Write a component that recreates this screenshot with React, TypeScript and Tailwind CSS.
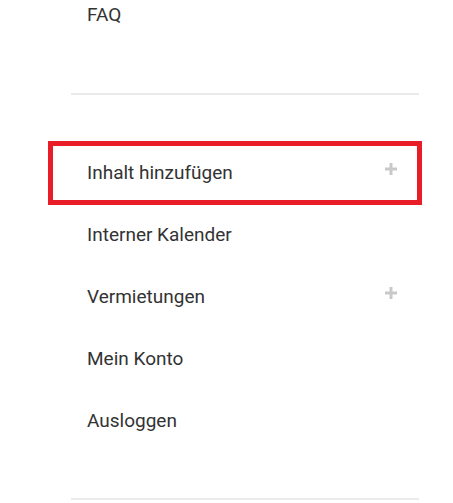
import React from "react";

type MenuItem = {
  label: string;
  expandable?: boolean;
  highlighted?: boolean;
};

const topItems: MenuItem[] = [{ label: "FAQ" }];

const accountItems: MenuItem[] = [
  { label: "Inhalt hinzufügen", expandable: true, highlighted: true },
  { label: "Interner Kalender" },
  { label: "Vermietungen", expandable: true },
  { label: "Mein Konto" },
  { label: "Ausloggen" }
];

function PlusIcon() {
  return (
    <svg width="12" height="12" viewBox="0 0 12 12" className="mb-2 shrink-0">
      <rect x="4.5" y="0" width="3" height="12" fill="#c9c9c9" />
      <rect x="0" y="4.5" width="12" height="3" fill="#c9c9c9" />
    </svg>
  );
}

function MenuRow({ item }: { item: MenuItem }) {
  return (
    <li className="relative">
      <a href="#" className="flex h-[62px] items-center justify-between pl-4 pr-[22px] text-[19px] text-[#333]">
        <span>{item.label}</span>
        {item.expandable && <PlusIcon />}
      </a>
      {item.highlighted && (
        <span className="pointer-events-none absolute -left-[23px] -right-[3px] -top-px -bottom-px border-[5px] border-[#e91d27]" />
      )}
    </li>
  );
}

export default function App() {
  return (
    <div className="min-h-[503px] bg-white" style={{ fontFamily: "Roboto, 'Noto Sans', sans-serif" }}>
      <nav className="-mt-[16px] ml-[71px] w-[348px]">
        <ul className="border-b-2 border-[#ebebeb] pb-[47px]">
          {topItems.map((item) => (
            <MenuRow key={item.label} item={item} />
          ))}
        </ul>
        <ul className="border-b-2 border-[#ebebeb] pt-[47px] pb-[46px]">
          {accountItems.map((item) => (
            <MenuRow key={item.label} item={item} />
          ))}
        </ul>
      </nav>
    </div>
  );
}
